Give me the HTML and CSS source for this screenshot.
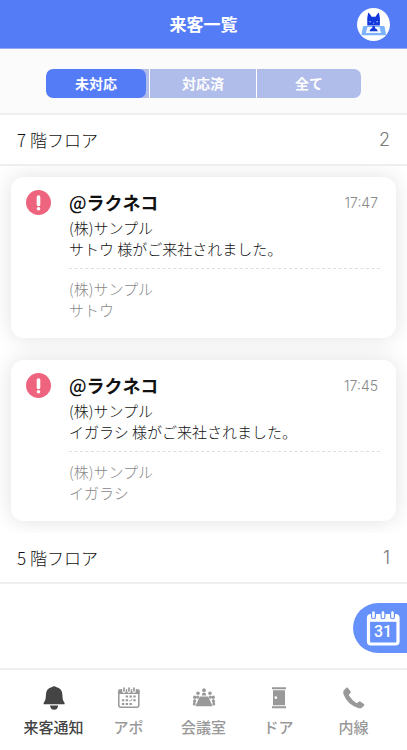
FILE: index.html
```html
<!DOCTYPE html>
<html lang="ja">
<head>
<meta charset="utf-8">
<meta name="viewport" content="width=device-width, initial-scale=1">
<title>来客一覧</title>
<link rel="stylesheet" href="styles.css">
</head>
<body>
<header class="header">
  <h1 class="header-title">来客一覧</h1>
  <button class="avatar" type="button" aria-label="アカウント">
    <svg viewBox="0 0 33 33" width="33" height="33" aria-hidden="true">
      <circle cx="16.500" cy="16.500" r="16.500" fill="#fff"/>
      <path d="M7 18h19.500q1 0 1.200 1l1.300 7.500q0 .8-.8.800H5.200q-.8 0-.7-.8L5.900 19q.2-1 1.100-1z" fill="#7eb2fa"/>
      <path d="M10.500 19h12l1.500 6H8.800z" fill="#f3f8ff"/>
      <path d="M10.300 17.400Q9.600 10 11.200 4.600q2 1.500 3.400 4.200h4q1.300-2.700 3.300-4.200 1.700 5.400 1 12.800z" fill="#1238dc"/>
      <path d="M15.500 18h2.200l.3 1.900q2.100.6 2.800 3.300h-8.300q.8-2.700 2.800-3.300z" fill="#1238dc"/>
      <path d="M12.200 13.200h1.600v1h-1.600zM19.400 13.200H21v1h-1.600zM16 14.700h1.300v.8H16z" fill="#b9cbff"/>
    </svg>
  </button>
</header>

<div class="filter">
  <div class="segments" role="group" aria-label="対応状況">
    <button class="segment segment-active" type="button" aria-pressed="true"><span class="segment-label">未対応</span></button>
    <button class="segment" type="button" aria-pressed="false"><span class="segment-label">対応済</span></button>
    <button class="segment" type="button" aria-pressed="false"><span class="segment-label">全て</span></button>
  </div>
</div>

<main class="content">
  <section class="floor">
    <div class="floor-head"><h2 class="floor-name"><span class="floor-number">7</span>階フロア</h2><span class="floor-count">2</span></div>
    <div class="cards">
      <article class="card">
        <svg class="alert" viewBox="0 0 25 25" width="25" height="25" aria-hidden="true">
          <circle cx="12.500" cy="12.500" r="12.500" fill="#ee647f"/>
          <path d="M12.500 7v7.500" stroke="#fff" stroke-width="3.600" stroke-linecap="round"/>
          <circle cx="12.500" cy="18.700" r="1.800" fill="#fff"/>
        </svg>
        <div class="card-body">
          <div class="card-head"><h3 class="card-title"><span class="card-at">@</span>ラクネコ</h3><time class="card-time">17:47</time></div>
          <p class="message">(株)サンプル<br>サトウ 様がご来社されました。</p>
          <svg class="rule" width="100%" height="1" aria-hidden="true"><path d="M0 .5H2000" stroke="#dcdcdc" stroke-dasharray="3 2.500"/></svg>
          <p class="visitor">(株)サンプル<br>サトウ</p>
        </div>
      </article>
      <article class="card">
        <svg class="alert" viewBox="0 0 25 25" width="25" height="25" aria-hidden="true">
          <circle cx="12.500" cy="12.500" r="12.500" fill="#ee647f"/>
          <path d="M12.500 7v7.500" stroke="#fff" stroke-width="3.600" stroke-linecap="round"/>
          <circle cx="12.500" cy="18.700" r="1.800" fill="#fff"/>
        </svg>
        <div class="card-body">
          <div class="card-head"><h3 class="card-title"><span class="card-at">@</span>ラクネコ</h3><time class="card-time">17:45</time></div>
          <p class="message">(株)サンプル<br>イガラシ 様がご来社されました。</p>
          <svg class="rule" width="100%" height="1" aria-hidden="true"><path d="M0 .5H2000" stroke="#dcdcdc" stroke-dasharray="3 2.500"/></svg>
          <p class="visitor">(株)サンプル<br>イガラシ</p>
        </div>
      </article>
    </div>
  </section>
  <section class="floor">
    <div class="floor-head"><h2 class="floor-name"><span class="floor-number">5</span>階フロア</h2><span class="floor-count">1</span></div>
  </section>
</main>

<div class="dock">
  <button class="calendar-button" type="button" aria-label="カレンダー">
    <svg viewBox="0 0 34 37" width="34" height="37" aria-hidden="true">
      <rect x="2.500" y="5.500" width="29.500" height="28.500" rx="2.500" fill="none" stroke="#fff" stroke-width="3.200"/>
      <path d="M2 6h30.500v5.800H2z" fill="#fff"/>
      <path d="M7.500 3.200v3.600M17 3.200v3.600M26.500 3.200v3.600" stroke="#6691fa" stroke-width="5" stroke-linecap="round"/>
      <path d="M7.500 2.500v4.500M17 2.500v4.500M26.500 2.500v4.500" stroke="#fff" stroke-width="2.600" stroke-linecap="round"/>
      <text class="calendar-day" x="17" y="27" text-anchor="middle">31</text>
    </svg>
  </button>
  <nav class="tabs" aria-label="メイン">
    <a class="tab tab-active" href="#" aria-current="page">
      <svg viewBox="0 0 24 24" width="24" height="24" aria-hidden="true">
        <path d="M12 .2q1.600 0 2 .9Q20.200 2.300 20.400 9q.1 5 1.500 6.700.7.700.7 1.700v.8H1.600v-.8q0-1 .7-1.700Q3.800 14 3.900 9q.2-6.700 6.300-7.900.4-.9 1.800-.9zM8 19.500h8.200q-.5 4.200-4.100 4.200T8 19.500z" fill="currentColor"/>
      </svg>
      <span>来客通知</span>
    </a>
    <a class="tab" href="#">
      <svg viewBox="0 0 24 24" width="24" height="24" aria-hidden="true">
        <rect x="1.800" y="4" width="20" height="17.300" rx="2" fill="none" stroke="currentColor" stroke-width="1.500"/>
        <path d="M1.500 3.500h21V8h-21z" fill="currentColor"/>
        <path d="M7 2.500v2.700M12 2.500v2.700M17 2.500v2.700" stroke="#fff" stroke-width="3.600" stroke-linecap="round"/>
        <path d="M7 2v3M12 2v3M17 2v3" stroke="currentColor" stroke-width="1.700" stroke-linecap="round"/>
        <path d="M8.700 9.500h2.400v2H8.700zM12.500 9.500h2.400v2h-2.400zM16.300 9.500h2.400v2h-2.400zM4.900 13.200h2.400v2H4.900zM8.700 13.200h2.400v2H8.700zM16.300 13.200h2.400v2h-2.400zM4.900 17h2.400v2H4.900zM8.700 17h2.400v2H8.700zM12.500 17h2.400v2h-2.400z" fill="currentColor"/>
        <path d="M12.400 14.200l1 1 2-2.400" stroke="currentColor" fill="none"/>
      </svg>
      <span>アポ</span>
    </a>
    <a class="tab" href="#">
      <svg viewBox="0 0 24 24" width="24" height="24" aria-hidden="true">
        <g fill="currentColor">
          <path d="M7.700 10.500h8.600l4.300 9.700H3.400z"/>
          <circle cx="12" cy="4.200" r="1.900"/><path d="M9.900 9.400q0-2.800 2.100-2.800t2.100 2.800z"/>
          <circle cx="6" cy="7.300" r="1.800"/><path d="M4 12q-.1-2.400 1.800-2.500 1.500 0 1.300 1.500L6.200 13z"/>
          <circle cx="18" cy="7.300" r="1.800"/><path d="M20 12q.1-2.400-1.800-2.500-1.500 0-1.300 1.500l.9 2z"/>
          <circle cx="2.800" cy="11.300" r="1.800"/><path d="M.9 15.500q0-2.200 2-2.200 1.800.1 1.300 1.700L3.200 17.200q-2.300 0-2.300-1.700z"/>
          <circle cx="21.200" cy="11.300" r="1.800"/><path d="M23.100 15.500q0-2.200-2-2.200-1.800.1-1.300 1.700l1 2.200q2.300 0 2.300-1.700z"/>
          <circle cx="2.200" cy="18" r="1.500"/><circle cx="21.800" cy="18" r="1.500"/>
        </g>
      </svg>
      <span>会議室</span>
    </a>
    <a class="tab" href="#">
      <svg viewBox="0 0 24 24" width="24" height="24" aria-hidden="true">
        <path d="M5 1.200h14v2H5zM6 4.200h12v15H6zM5 20.200h14v2H5z" fill="currentColor"/>
        <circle cx="8.800" cy="11.700" r="1.400" fill="#fff"/>
      </svg>
      <span>ドア</span>
    </a>
    <a class="tab" href="#">
      <svg viewBox="0 0 24 24" width="24" height="24" aria-hidden="true">
        <path d="M1.500 4.800L4.500 1.600q.7-.5 1.300.2l2.800 3.600q.6.900-.1 1.600L7 8.500q-.3.500 0 1 3 4.800 7.200 7.400.6.300 1 0l1.500-1.200q.8-.6 1.600-.1l3.600 2.300q.9.600.2 1.500l-2 2.100q-1.600 1.300-4 .6Q5 18 1.600 8.500.8 6 1.500 4.800z" fill="currentColor"/>
      </svg>
      <span>内線</span>
    </a>
  </nav>
</div>
</body>
</html>
```
FILE: styles.css
```css
* {
  box-sizing: border-box;
}

body {
  margin: 0;
  min-height: 100vh;
  display: flex;
  flex-direction: column;
  background: #fff;
  color: #111;
  font-family: "Noto Sans CJK JP", sans-serif;
  font-weight: 300;
}

h1,
h2,
h3,
p {
  margin: 0;
}

button {
  padding: 0;
  border: 0;
  background: none;
  color: inherit;
  font: inherit;
  cursor: pointer;
}

svg {
  display: block;
}

.header {
  display: grid;
  grid-template-columns: 1fr auto 1fr;
  align-items: center;
  height: 49px;
  padding: 0 17px;
  border-bottom: 1px solid #98aaf0;
  background: #557cf7;
  color: #fff;
}

.header-title {
  grid-column: 2;
  font-size: 17px;
  line-height: 24px;
  font-weight: 700;
}

.avatar {
  justify-self: end;
}

.filter {
  padding: 20px 46px 15px;
  border-bottom: 2px solid #eee;
  background: #fbfbfb;
}

.segments {
  display: grid;
  grid-template-columns: 103fr 107fr 105fr;
  height: 29px;
  overflow: hidden;
  border-radius: 7px;
  background: #b0bce9;
  color: #fff;
}

.segment {
  display: flex;
  font-size: 14px;
  line-height: 29px;
  font-weight: 700;
}

.segment + .segment {
  border-left: 1px solid #fff;
}

.segment-label {
  flex: 1;
}

.segment-active {
  padding-right: 3px;
}

.segment-active .segment-label {
  border-radius: 7px;
  background: #557cf7;
}

.content {
  flex: 1;
}

.floor-head {
  display: flex;
  justify-content: space-between;
  height: 51px;
  padding: 0 17px;
  border-bottom: 2px solid #eee;
  line-height: 50px;
}

.floor-name {
  font-size: 17px;
  font-weight: 300;
}

.floor-number {
  margin-right: 4px;
}

.floor-count {
  color: #777;
  font-family: Inter, sans-serif;
  font-size: 18px;
}

.cards {
  display: grid;
  gap: 22px;
  padding: 11px 11px 12px;
  overflow: hidden;
}

.card {
  display: flex;
  gap: 18px;
  padding: 12px 16px 18px 15px;
  border-radius: 13px;
  background: #fff;
  box-shadow: 0 0 22px rgba(0, 0, 0, 0.12);
}

.alert {
  flex: none;
  margin-top: 1px;
}

.card-body {
  flex: 1;
}

.card-head {
  display: flex;
  justify-content: space-between;
  align-items: flex-start;
  height: 26px;
  margin-bottom: 2px;
}

.card-title {
  font-size: 18px;
  line-height: 26px;
  font-weight: 700;
}

.card-at {
  font-weight: 500;
}

.card-time {
  padding-right: 2px;
  color: #888;
  font-family: Inter, sans-serif;
  font-size: 14px;
  line-height: 28px;
}

.message,
.visitor {
  font-size: 15px;
  line-height: 21px;
}

.rule {
  margin: 9px 0;
}

.visitor {
  color: #888;
}

.dock {
  position: sticky;
  bottom: 0;
}

.calendar-button {
  position: absolute;
  right: 0;
  bottom: 97px;
  width: 54px;
  height: 50px;
  padding-left: 13px;
  border-radius: 25px 0 0 25px;
  background: #6691fa;
}

.calendar-day {
  fill: #fff;
  font-family: Roboto, sans-serif;
  font-size: 16px;
  font-weight: 500;
}

.tabs {
  display: grid;
  grid-template-columns: repeat(5, 1fr);
  height: 82px;
  padding: 16px 16px 0;
  border-top: 2px solid #eee;
  background: #fff;
}

.tab {
  display: flex;
  flex-direction: column;
  align-items: center;
  gap: 6px;
  color: #999;
  font-size: 15px;
  line-height: 22px;
  font-weight: 500;
  text-decoration: none;
}

.tab-active {
  color: #444;
}
```
